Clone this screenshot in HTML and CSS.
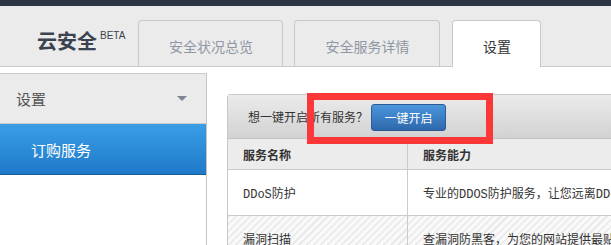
FILE: index.html
```html
<!DOCTYPE html>
<html lang="zh-CN">
<head>
<meta charset="utf-8">
<title>云安全</title>
<link rel="stylesheet" href="styles.css">
</head>
<body>
<div class="topbar"></div>
<header class="header">
  <div class="logo">云安全<sup class="beta">BETA</sup></div>
  <nav class="tabs">
    <a class="tab">安全状况总览</a>
    <a class="tab">安全服务详情</a>
    <a class="tab tab-active">设置</a>
  </nav>
</header>
<div class="main">
  <aside class="sidebar">
    <div class="side-group">设置<span class="caret"></span></div>
    <div class="side-item active">订购服务</div>
  </aside>
  <section class="content">
    <div class="panel">
      <div class="panel-head">
        <span class="ask">想一键开启所有服务？</span>
        <button class="btn">一键开启</button>
      </div>
      <div class="grid">
        <div class="th c1">服务名称</div>
        <div class="th">服务能力</div>
        <div class="td c1 mono">DDoS防护</div>
        <div class="td mono">专业的DDOS防护服务，让您远离DDoS攻击的困扰，保障业务稳定运行</div>
        <div class="td c1 striped">漏洞扫描</div>
        <div class="td striped">查漏洞防黑客，为您的网站提供最贴心的安全检测服务</div>
      </div>
    </div>
  </section>
</div>
<div class="mark"></div>
</body>
</html>
```
FILE: styles.css
```css
html, body {
  margin: 0;
  padding: 0;
  width: 611px;
  height: 245px;
  overflow: hidden;
  background: #fff;
  font-family: "Noto Sans CJK SC", "Liberation Sans", sans-serif;
  color: #333;
}
.topbar {
  height: 6px;
  background: #2e3646;
}
.header {
  height: 60px;
  background: #ebebeb;
  border-bottom: 1px solid #cbcbcb;
  display: flex;
  align-items: flex-end;
  padding-left: 37px;
}
.logo {
  font-size: 20px;
  line-height: 20px;
  font-weight: 700;
  color: #3b4351;
  margin-bottom: 15px;
  display: flex;
  align-items: flex-start;
  white-space: nowrap;
}
.beta {
  font-family: "Liberation Sans", sans-serif;
  font-size: 10px;
  font-weight: 400;
  line-height: 10px;
  margin-left: 3px;
  margin-top: 0;
  vertical-align: top;
}
.tabs {
  display: flex;
  align-items: flex-end;
  margin-left: 13px;
  gap: 11px;
}
.tab {
  box-sizing: border-box;
  height: 46px;
  width: 145px;
  border: 1px solid #c9c9c9;
  border-bottom: none;
  border-radius: 4px 4px 0 0;
  background: #ebebeb;
  color: #8e97a4;
  font-size: 14px;
  line-height: 46px;
  text-align: center;
  padding-top: 2px;
}
.tab + .tab {
  width: 146px;
}
.tab-active {
  width: 89px !important;
  height: 47px;
  margin-bottom: -1px;
  margin-left: 1px;
  background: #fff;
  color: #333;
  line-height: 46px;
}
.main {
  display: flex;
  margin-top: 6px;
}
.sidebar {
  width: 206px;
  flex: none;
  border-top: 1px solid #cbcbcb;
  border-right: 1px solid #c4c4c4;
  height: 200px;
}
.side-group {
  height: 49px;
  background: #ebebeb;
  border-bottom: 1px solid #cbcbcb;
  display: flex;
  align-items: center;
  padding-left: 16px;
  padding-right: 19px;
  font-size: 15px;
  color: #555;
}
.caret {
  margin-left: auto;
  width: 0;
  height: 0;
  border-left: 5px solid transparent;
  border-right: 5px solid transparent;
  border-top: 5px solid #7d8593;
}
.side-item {
  height: 50px;
  display: flex;
  align-items: center;
  padding-left: 31px;
  font-size: 15px;
}
.side-item.active {
  background: linear-gradient(#3a9ee6, #1f79c9);
  border-bottom: 1px solid #1b5b93;
  color: #fff;
}
.content {
  flex: 1;
  padding: 21px 0 0 20px;
  min-width: 0;
}
.panel {
  width: 560px;
  border: 1px solid #c8c8c8;
  border-radius: 3px 0 0 0;
}
.panel-head {
  height: 43px;
  background: linear-gradient(#ebebeb, #d2d2d2);
  border-bottom: 1px solid #c2c2c2;
  display: flex;
  align-items: center;
  padding-left: 20px;
  font-size: 12px;
}
.ask {
  color: #333;
}
.btn {
  box-sizing: border-box;
  width: 75px;
  height: 27px;
  margin-left: 3px;
  margin-top: 1px;
  border: 1px solid #2b5b94;
  border-radius: 3px;
  background: linear-gradient(#4c96de, #2d68ab);
  color: #fff;
  font-family: "Noto Sans CJK SC", sans-serif;
  font-size: 12px;
  padding: 0;
}
.grid {
  display: grid;
  grid-template-columns: 180px 1fr;
}
.th, .td {
  box-sizing: border-box;
  padding-left: 15px;
  display: flex;
  align-items: center;
  white-space: nowrap;
  overflow: hidden;
  font-size: 12px;
  border-bottom: 1px solid #cbcbcb;
}
.c1 {
  border-right: 1px solid #cbcbcb;
}
.th {
  height: 31px;
  background: #ececec;
  font-weight: 700;
  color: #333;
}
.td {
  height: 46px;
  background: #fff;
}
.mono {
  font-family: "Liberation Mono", "Noto Sans CJK SC", monospace;
}
.striped {
  background: repeating-linear-gradient(135deg, #e9e9e9 0 1.5px, #f9f9f9 1.5px 5px);
}
.mark {
  position: absolute;
  left: 307px;
  top: 93px;
  width: 186px;
  height: 51px;
  box-sizing: border-box;
  border: 7px solid #fb3737;
}
```
